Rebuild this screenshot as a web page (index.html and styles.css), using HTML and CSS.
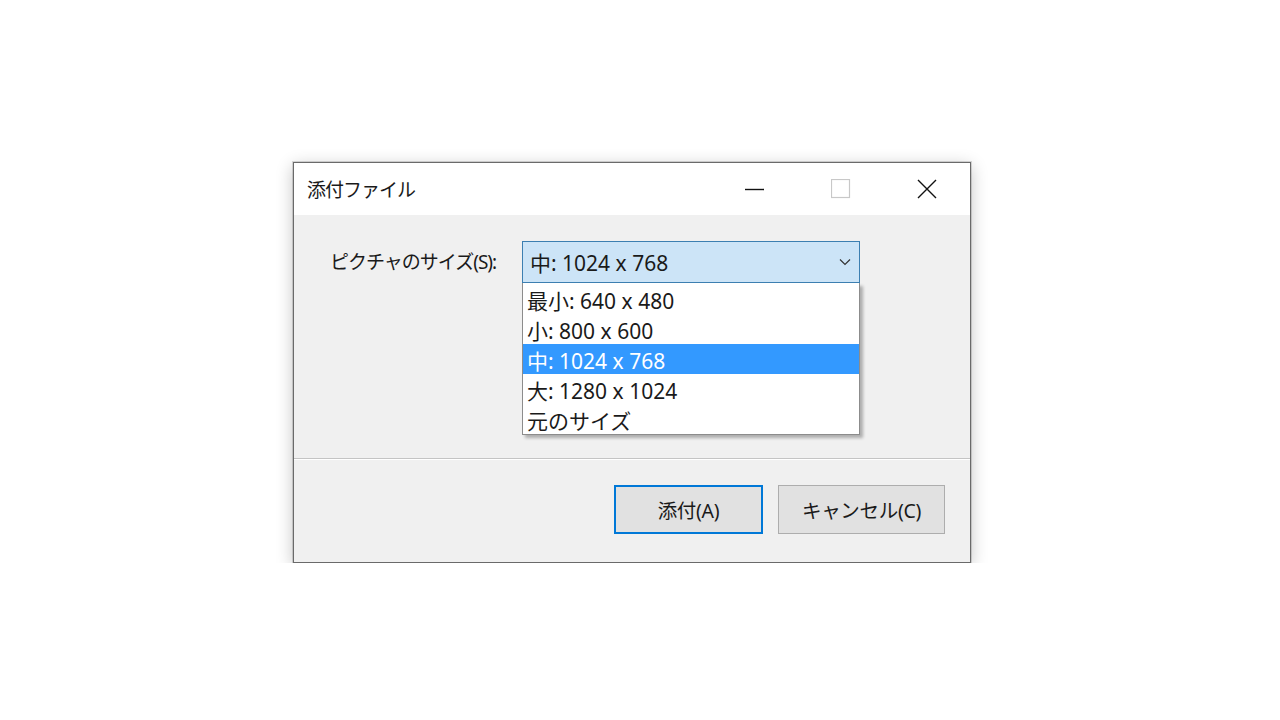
FILE: index.html
```html
<!DOCTYPE html>
<html lang="ja">

<head>
    <meta charset="UTF-8">
    <meta name="viewport" content="width=device-width, initial-scale=1.0">
    <title>添付ファイル</title>
    <link rel="stylesheet" href="styles.css">
</head>

<body>
    <section class="dialog">
        <header class="titlebar">
            <h1 class="title">添付ファイル</h1>
            <div class="captionButtons">
                <span class="capBtn">
                    <svg width="20" height="20" viewBox="0 0 20 20"><path d="M0 10.5h19" stroke="#111" stroke-width="1.4" /></svg>
                </span>
                <span class="capBtn">
                    <svg width="20" height="20" viewBox="0 0 20 20"><rect x="0.5" y="0.5" width="18" height="18" fill="none" stroke="#c8c8c8" stroke-width="1.2" /></svg>
                </span>
                <span class="capBtn">
                    <svg width="20" height="20" viewBox="0 0 20 20"><path d="M1 1l18 18M19 1L1 19" stroke="#111" stroke-width="1.4" /></svg>
                </span>
            </div>
        </header>

        <div class="content">
            <label class="fieldLabel">ピクチャのサイズ(S):</label>
            <div class="combo">
                <div class="comboBox">
                    <span>中: 1024 x 768</span>
                    <svg class="chevron" width="12" height="8" viewBox="0 0 12 8"><path d="M1 1.5l5 5 5-5" fill="none" stroke="#333" stroke-width="1.2" /></svg>
                </div>
                <ul class="dropList">
                    <li>最小: 640 x 480</li>
                    <li>小: 800 x 600</li>
                    <li class="selected">中: 1024 x 768</li>
                    <li>大: 1280 x 1024</li>
                    <li>元のサイズ</li>
                </ul>
            </div>
        </div>

        <footer class="footer">
            <button class="btn btnDefault">添付(A)</button>
            <button class="btn btnCancel">キャンセル(C)</button>
        </footer>
    </section>
</body>

</html>
```

FILE: styles.css
```css
* {
    box-sizing: border-box;
    margin: 0;
    padding: 0;
}

body {
    background-color: #ffffff;
    font-family: "Noto Sans", "Noto Sans CJK JP", sans-serif;
    color: #1a1a1a;
    padding: 162px 0 0 293px;
}

.dialog {
    width: 678px;
    height: 401px;
    border: 1px solid #6a6a6a;
    background-color: #f0f0f0;
    box-shadow: 0 0 0 1px rgba(0, 0, 0, 0.14), 0 4px 16px rgba(0, 0, 0, 0.24);
    display: flex;
    flex-direction: column;
}

.titlebar {
    height: 52px;
    background-color: #ffffff;
    display: flex;
    align-items: center;
    justify-content: space-between;
    padding-left: 13px;
}

.title {
    font-size: 19px;
    font-weight: normal;
    letter-spacing: -1px;
}

.captionButtons {
    display: flex;
    height: 100%;
}

.capBtn {
    width: 86px;
    display: grid;
    place-items: center;
}

.content {
    flex: 1;
    display: flex;
    align-items: flex-start;
    padding: 26px 0 0 36px;
}

.fieldLabel {
    width: 192px;
    height: 42px;
    line-height: 42px;
    font-size: 19px;
    letter-spacing: -1px;
}

.combo {
    position: relative;
}

.comboBox {
    width: 338px;
    height: 42px;
    border: 1px solid #3c7fb1;
    background-color: #cce4f7;
    display: flex;
    align-items: center;
    justify-content: space-between;
    padding: 0 8px 0 7px;
    font-size: 21px;
}

.dropList {
    position: absolute;
    top: 42px;
    left: 0;
    width: 338px;
    list-style: none;
    background-color: #ffffff;
    border: 1px solid #8c8c8c;
    border-top: none;
    box-shadow: 3px 3px 3px rgba(0, 0, 0, 0.28);
    padding-top: 1px;
}

.dropList li {
    height: 30px;
    line-height: 34px;
    padding-left: 4px;
    font-size: 21px;
}

.dropList .selected {
    background-color: #3399ff;
    color: #ffffff;
}

.footer {
    height: 104px;
    border-top: 1px solid #c4c4c4;
    box-shadow: inset 0 1px 0 #ffffff;
    display: flex;
    justify-content: flex-end;
    align-items: flex-start;
    gap: 15px;
    padding: 26px 25px 0 0;
}

.btn {
    height: 49px;
    font-family: inherit;
    font-size: 19.5px;
    letter-spacing: -0.3px;
    color: #1a1a1a;
    background-color: #e1e1e1;
}

.btnDefault {
    width: 149px;
    border: 2px solid #0078d7;
}

.btnCancel {
    width: 167px;
    border: 1px solid #adadad;
}
```
